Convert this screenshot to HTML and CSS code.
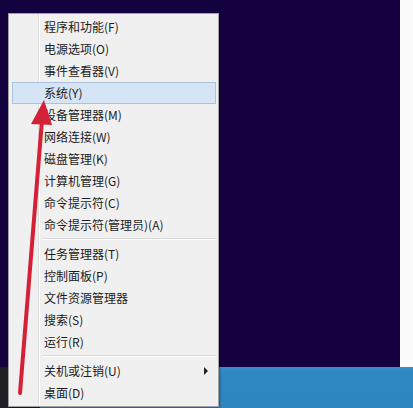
FILE: index.html
```html
<!DOCTYPE html>
<html lang="zh-CN">
<head>
<meta charset="utf-8">
<title>Win+X 菜单</title>
<link rel="stylesheet" href="styles.css">
</head>
<body>
<div class="screen">
  <div class="desktop">
    <div class="wallpaper"></div>
    <div class="strip"></div>
  </div>
  <div class="taskbar">
    <div class="start"></div>
    <div class="bar"></div>
  </div>

  <div class="menu">
    <div class="item">程序和功能(F)</div>
    <div class="item">电源选项(O)</div>
    <div class="item">事件查看器(V)</div>
    <div class="item active">系统(Y)</div>
    <div class="item">设备管理器(M)</div>
    <div class="item">网络连接(W)</div>
    <div class="item">磁盘管理(K)</div>
    <div class="item">计算机管理(G)</div>
    <div class="item">命令提示符(C)</div>
    <div class="item">命令提示符(管理员)(A)</div>
    <div class="sep"></div>
    <div class="item">任务管理器(T)</div>
    <div class="item">控制面板(P)</div>
    <div class="item">文件资源管理器</div>
    <div class="item">搜索(S)</div>
    <div class="item">运行(R)</div>
    <div class="sep"></div>
    <div class="item sub"><span>关机或注销(U)</span><span class="caret"></span></div>
    <div class="item">桌面(D)</div>
  </div>

  <svg class="arrow" width="413" height="408" viewBox="0 0 413 408">
    <line x1="42" y1="120" x2="20" y2="393" stroke="#d42137" stroke-width="4" stroke-linecap="round"/>
    <polygon points="44,100 31,124 52,125" fill="#d42137"/>
  </svg>
</div>
</body>
</html>
```

FILE: styles.css
```css
html, body {
  margin: 0;
  padding: 0;
}

body {
  width: 413px;
  height: 408px;
  overflow: hidden;
  font-family: "Noto Sans CJK SC", "Noto Sans", "Liberation Sans", sans-serif;
}

.screen {
  position: relative;
  width: 413px;
  height: 408px;
  display: flex;
  flex-direction: column;
}

.desktop {
  flex: 1;
  display: flex;
}

.wallpaper {
  flex: 1;
  background: #13023f;
}

.strip {
  width: 13px;
  background: #fbfbfb;
}

.taskbar {
  height: 41px;
  display: flex;
}

.start {
  width: 40px;
  background: #1e1e24;
}

.bar {
  flex: 1;
  background: linear-gradient(#3590c8, #2d87c1 6px, #2c86c0);
}

.menu {
  position: absolute;
  left: 8px;
  top: 13px;
  width: 211px;
  box-sizing: border-box;
  border: 1px solid #a0a0a0;
  padding: 2px 2px 2px 3px;
  background:
    linear-gradient(to right,
      transparent 29px, #dcdcdc 29px, #dcdcdc 30px,
      #ffffff 30px, #ffffff 31px, transparent 31px),
    #f0f0f0;
  box-shadow: 1px 1px 2px rgba(0, 0, 0, 0.35);
}

.item {
  height: 20px;
  line-height: 20px;
  border: 1px solid transparent;
  padding-left: 31px;
  padding-right: 7px;
  font-size: 12px;
  color: #1c1c1c;
  white-space: nowrap;
}

.item.active {
  background: #d6e5f5;
  border-color: #a9c3de;
}

.item.sub {
  display: flex;
  justify-content: space-between;
  align-items: center;
}

.caret {
  width: 0;
  height: 0;
  border-top: 4px solid transparent;
  border-bottom: 4px solid transparent;
  border-left: 4px solid #222;
}

.sep {
  height: 0;
  margin: 2px 0 3px 30px;
  border-top: 1px solid #d9d9d9;
  border-bottom: 1px solid #ffffff;
}

.arrow {
  position: absolute;
  left: 0;
  top: 0;
  pointer-events: none;
}
```
